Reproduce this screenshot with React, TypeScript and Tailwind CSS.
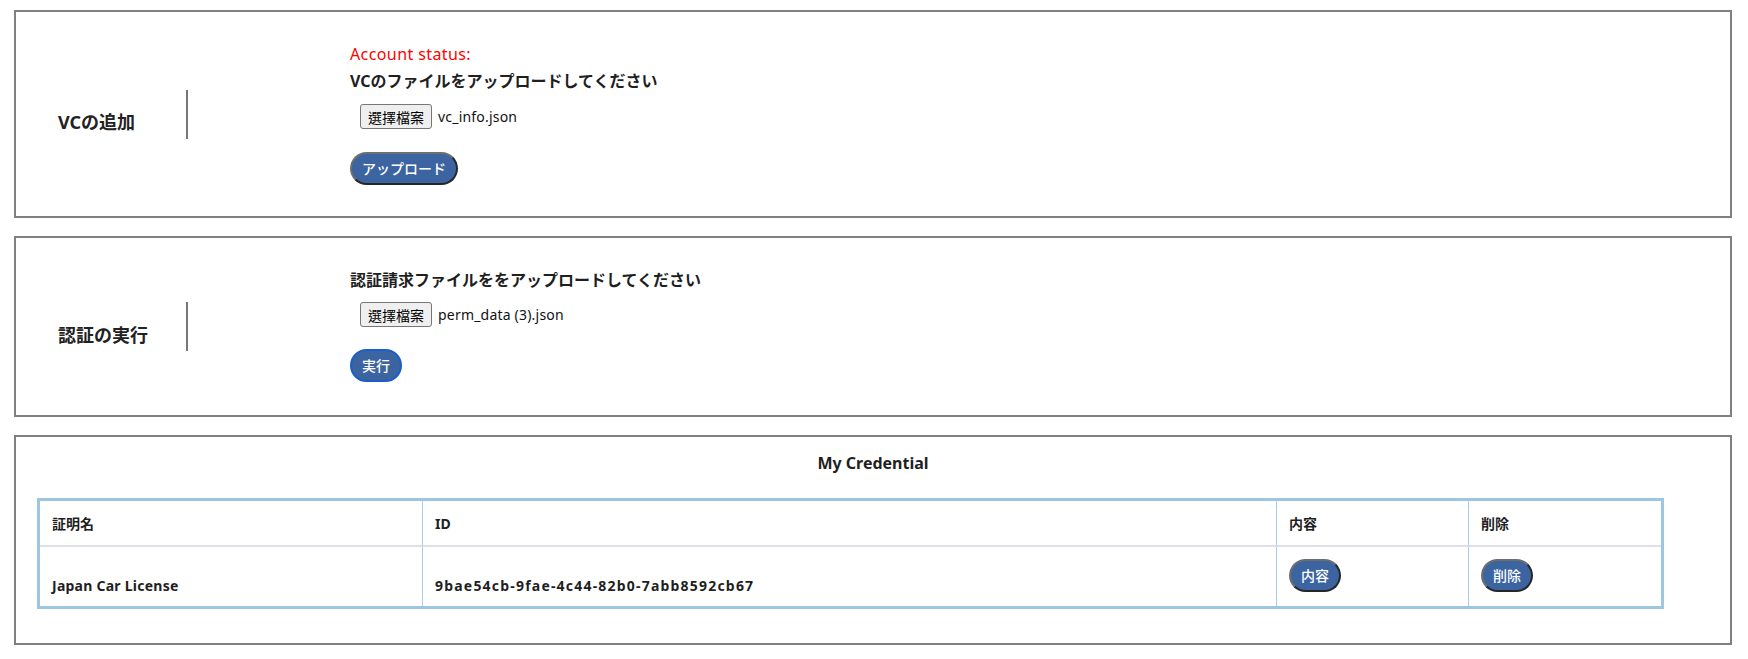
const btnBase =
  'block h-[33px] rounded-full bg-[#3b64a0] px-[10px] text-[14px] font-medium leading-none text-white border-2';
const btnIdle = 'border-t-[#6e6e6e] border-l-[#6e6e6e] border-r-[#262626] border-b-[#262626]';
const btnFocus = 'border-[#1c5fc4]';

function FileInput({ fileName, className }: { fileName: string; className?: string }) {
  return (
    <div className={`ml-[10px] flex h-[25px] items-center ${className ?? ''}`}>
      <button
        className="h-[25px] rounded-[3px] border border-[#767676] bg-[#efefef] px-[7px] text-[14px] leading-none text-black"
        style={{ fontFamily: '"Noto Sans CJK TC", "Noto Sans CJK JP", sans-serif' }}
      >
        選擇檔案
      </button>
      <span className="ml-[6px] text-[14px] leading-none tracking-[0.2px] text-[#111]">{fileName}</span>
    </div>
  );
}

function SideLabel({ text }: { text: string }) {
  return (
    <>
      <div className="mt-4 w-[170px] shrink-0 pl-[42px]">
        <h2 className="text-[18px] font-bold leading-[24px] text-[#222]">{text}</h2>
      </div>
      <div className="h-[49px] w-[2px] shrink-0 bg-[#777]" />
    </>
  );
}

export default function App() {
  return (
    <div
      className="min-h-[659px] bg-white pt-[10px] text-[#1f1f1f]"
      style={{ fontFamily: '"Noto Sans", "Noto Sans CJK JP", sans-serif' }}
    >
      {/* VC upload */}
      <section className="ml-[14px] mr-[16px] flex items-center border-2 border-[#808080]">
        <SideLabel text="VCの追加" />
        <div className="ml-[162px] pt-[30px] pb-[31px]">
          <p className="text-[16px] leading-[24px] tracking-[0.4px] text-[#ff0000]">Account status:</p>
          <p className="mt-[3px] text-[16px] font-bold leading-[24px]">VCのファイルをアップロードしてください</p>
          <FileInput fileName="vc_info.json" className="mt-[11px]" />
          <button className={`mt-[23px] ${btnBase} ${btnIdle}`}>アップロード</button>
        </div>
      </section>

      {/* verification */}
      <section className="mt-[18px] ml-[14px] mr-[16px] flex items-center border-2 border-[#808080]">
        <SideLabel text="認証の実行" />
        <div className="ml-[162px] pt-[30px] pb-[33px]">
          <p className="text-[16px] font-bold leading-[24px]">認証請求ファイルををアップロードしてください</p>
          <FileInput fileName="perm_data (3).json" className="mt-[10px]" />
          <button className={`mt-[22px] ${btnBase} ${btnFocus}`}>実行</button>
        </div>
      </section>

      {/* credentials */}
      <section className="mt-[18px] ml-[14px] mr-[16px] border-2 border-[#808080] pt-[14px] pb-[34px]">
        <h2 className="text-center text-[16px] font-bold leading-[24px]">My Credential</h2>
        <table className="mt-[23px] ml-[21px] w-[1627px] table-fixed border-separate border-spacing-0 border-[3px] border-[#9cc6e2] text-[14px]">
          <colgroup>
            <col className="w-[382px]" />
            <col className="w-[854px]" />
            <col className="w-[192px]" />
            <col className="w-[193px]" />
          </colgroup>
          <thead>
            <tr>
              <th className="h-[46px] border-b-2 border-[#dde1e6] px-3 text-left align-middle font-bold">証明名</th>
              <th className="h-[46px] border-b-2 border-l border-b-[#dde1e6] border-l-[#a8cde4] px-3 text-left align-middle font-bold">ID</th>
              <th className="h-[46px] border-b-2 border-l border-b-[#dde1e6] border-l-[#a8cde4] px-3 text-left align-middle font-bold">内容</th>
              <th className="h-[46px] border-b-2 border-l border-b-[#dde1e6] border-l-[#a8cde4] px-3 text-left align-middle font-bold">削除</th>
            </tr>
          </thead>
          <tbody>
            <tr>
              <td className="h-[59px] px-3 pb-[10px] align-bottom font-bold leading-[20px] tracking-[0.25px]">Japan Car License</td>
              <td className="h-[59px] border-l border-[#a8cde4] px-3 pb-[10px] align-bottom font-bold leading-[20px] tracking-[1.2px]">
                9bae54cb-9fae-4c44-82b0-7abb8592cb67
              </td>
              <td className="h-[59px] border-l border-[#a8cde4] px-3 pt-[12px] align-top">
                <button className={`${btnBase} ${btnIdle}`}>内容</button>
              </td>
              <td className="h-[59px] border-l border-[#a8cde4] px-3 pt-[12px] align-top">
                <button className={`${btnBase} ${btnIdle}`}>削除</button>
              </td>
            </tr>
          </tbody>
        </table>
      </section>
    </div>
  );
}
